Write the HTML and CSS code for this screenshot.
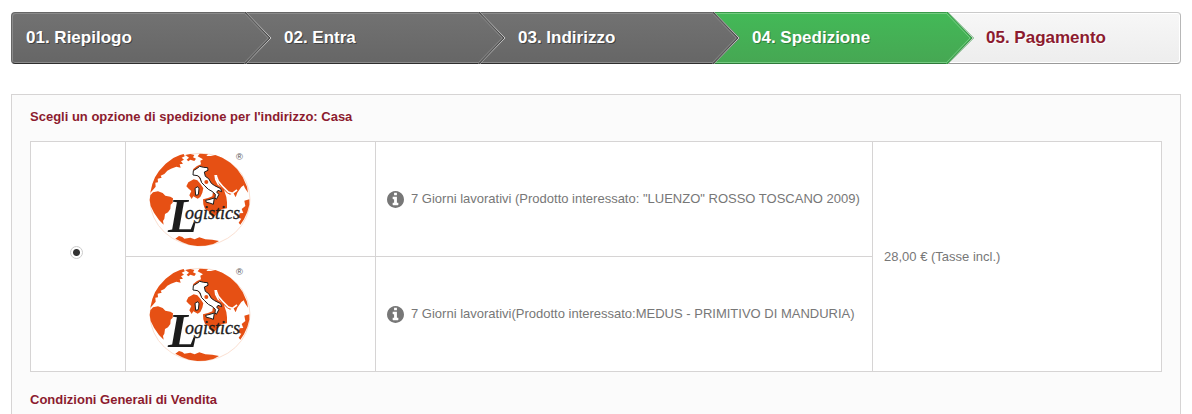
FILE: index.html
```html
<!DOCTYPE html>
<html lang="it">
<head>
  <meta charset="UTF-8" />
  <meta name="viewport" content="width=device-width, initial-scale=1.0"/>
  <title>Spedizione</title>
  <link rel="stylesheet" href="styles.css">
</head>
<body>
  <svg class="defs" aria-hidden="true">
    <symbol id="info" viewBox="0 128 1536 1536">
      <path d="M1024 1376v-160q0-14-9-23t-23-9h-96v-512q0-14-9-23t-23-9h-320q-14 0-23 9t-9 23v160q0 14 9 23t23 9h96v320h-96q-14 0-23 9t-9 23v160q0 14 9 23t23 9h448q14 0 23-9t9-23zm-128-896v-160q0-14-9-23t-23-9h-192q-14 0-23 9t-9 23v160q0 14 9 23t23 9h192q14 0 23-9t9-23zm640 416q0 209-103 385.5t-279.5 279.5-385.5 103-385.5-103-279.5-279.5-103-385.5 103-385.5 279.5-279.5 385.5-103 385.5 103 279.5 279.5 103 385.5z"/>
    </symbol>
    <symbol id="globe" viewBox="42 36 309 285" overflow="visible">
      <ellipse cx="195" cy="179" rx="150" ry="139" fill="#fff" stroke="#fbe0d2" stroke-width="3"/>
      <g fill="#e65014">
        <path d="M52 132L60 112 72 93 92 71 115 54 135 45 146 42 149 49 140 53 147 59 138 64 144 71 134 73 137 83 124 80 108 86 97 92 88 102 77 107 80 113 68 116 69 127 61 128 62 140 53 151 46 158Z"/>
        <path d="M44 180L46 166 54 157 69 154 83 159 91 167 106 170 114 175 113 188 107 194 106 207 99 217 90 222 88 236 84 243 86 254 72 240 57 218 47 198Z"/>
        <path d="M151 45L166 42 178 45 174 52 183 56 178 63 166 59 160 64 155 59 162 53Z"/>
        <path d="M188 49L194 41 219 43 214 48 228 48 241 45 262 53 286 68 306 87 323 111 336 140 339 158 330 145 326 136 319 141 307 158 302 172 295 159 285 164 276 159 253 136 244 113 247 105 238 105 240 119 248 134 266 147 274 171 276 187 276 205 260 208 244 224 233 233 224 216 210 207 205 193 204 178 219 174 232 169 234 155 215 145 200 128 191 112 183 105 177 101 174 88 186 78 198 73 196 62 204 58Z"/>
        <path d="M154 139L160 127 176 118 187 121 196 131 205 145 202 158 196 171 188 176 175 169 170 177 163 166 169 153 161 146Z"/>
        <path d="M328 182L343 178 343 194 337 216 327 238 316 254 311 248 319 236 310 233 314 220 325 219 320 207 331 198Z"/>
        <path d="M121 296L132 288 142 291 148 296 166 293 179 298 193 292 211 298 232 299 252 303 235 312 211 317 187 318 162 314 142 307Z"/>
      </g>
      <!-- Red Sea coast -->
      <path d="M243 106L250 124 262 138 280 156 292 160 306 150" fill="none" stroke="#fff" stroke-width="5"/>
      <g fill="#fff" stroke="#1c1c1c" stroke-width="3" stroke-linejoin="round">
        <path d="M174 105L175 92 188 84 194 79 206 82 218 83 219 91 208 96 211 109 221 116 229 130 239 137 257 146 260 155 249 151 245 157 252 163 244 178 240 174 241 163 231 154 220 148 208 136 200 128 195 113 188 107Z"/>
        <path d="M212 181L225 178 238 174 235 193 224 189 214 187Z"/>
        <path d="M180 145L188 140 192 146 190 164 182 166Z"/>
      </g>
      <circle cx="214" cy="126" r="6" fill="#e65014"/>
      <text class="logo-cap" x="99" y="275" font-size="146">L</text>
      <text class="logo-name" x="150" y="238" font-size="54">ogistics</text>
      <text class="logo-mark" x="303" y="61" font-size="28">®</text>
    </symbol>
    <symbol id="arrow" viewBox="0 0 28 52">
      <path class="arrow-inner" d="M0 1L24 26 0 51"/>
      <path class="arrow-edge" d="M1 0L26 26 1 52"/>
      <path class="arrow-outer" d="M2 0L27 26 2 52"/>
    </symbol>
  </svg>

  <ul class="steps">
    <li class="step done"><a href="#">01. Riepilogo</a><svg class="arrow"><use href="#arrow"/></svg></li>
    <li class="step done"><a href="#">02. Entra</a><svg class="arrow"><use href="#arrow"/></svg></li>
    <li class="step done"><a href="#">03. Indirizzo</a><svg class="arrow"><use href="#arrow"/></svg></li>
    <li class="step current"><span>04. Spedizione</span><svg class="arrow"><use href="#arrow"/></svg></li>
    <li class="step todo"><span>05. Pagamento</span></li>
  </ul>

  <form class="order">
    <p class="title">Scegli un opzione di spedizione per l'indirizzo: Casa</p>
    <table class="delivery">
      <colgroup>
        <col class="col-radio">
        <col class="col-logo">
        <col class="col-info">
        <col>
      </colgroup>
      <tr>
        <td class="pick" rowspan="2"><input type="radio" name="delivery" aria-label="Logistics" checked></td>
        <td class="logo"><svg role="img" aria-label="Logistics"><use href="#globe"/></svg></td>
        <td><div class="delay"><svg class="icon"><use href="#info"/></svg>7 Giorni lavorativi (Prodotto interessato: "LUENZO" ROSSO TOSCANO 2009)</div></td>
        <td rowspan="2">28,00 € (Tasse incl.)</td>
      </tr>
      <tr>
        <td class="logo"><svg role="img" aria-label="Logistics"><use href="#globe"/></svg></td>
        <td><div class="delay"><svg class="icon"><use href="#info"/></svg>7 Giorni lavorativi(Prodotto interessato:MEDUS - PRIMITIVO DI MANDURIA)</div></td>
      </tr>
    </table>
    <p class="title">Condizioni Generali di Vendita</p>
  </form>
</body>
</html>
```
FILE: styles.css
```css
* {
  box-sizing: border-box;
}
body {
  margin: 0;
  padding: 12px 11px 0;
  background: #fff;
  color: #777;
  font-family: "Liberation Sans", Arial, sans-serif;
  font-size: 13px;
  line-height: 18px;
}
.defs {
  position: absolute;
  width: 0;
  height: 0;
}

/* order steps */
.steps {
  display: flex;
  margin: 0 0 30px;
  padding: 0;
  list-style: none;
}
.step {
  position: relative;
  width: 20%;
  height: 52px;
  padding-left: 39px;
  border: 1px solid;
  border-width: 1px 0;
  font-size: 17px;
  font-weight: bold;
  line-height: 50px;
}
.step:first-child {
  padding-left: 14px;
  border-left-width: 1px;
  border-radius: 4px 0 0 4px;
}
.step:last-child {
  border-right-width: 1px;
  border-radius: 0 4px 4px 0;
}
.step a {
  color: inherit;
  text-decoration: none;
}
.done {
  background: linear-gradient(#727272, #666);
  border-color: #666 #5a5a5a #2e2e2e #666;
  box-shadow: inset 0 1px #8b8b8b, inset 0 -1px #8b8b8b;
  color: #fff;
  text-shadow: 1px 1px rgba(0, 0, 0, 0.4);
}
.done:first-child {
  box-shadow: inset 1px 1px #8b8b8b, inset 0 -1px #8b8b8b;
}
.current {
  background: linear-gradient(#43b957, #46a753);
  border-color: #399a49 #399a49 #2e7a3a;
  box-shadow: inset 0 1px #74ca81, inset 0 -1px #74ca81;
  color: #fff;
  text-shadow: 1px 1px rgba(0, 0, 0, 0.3);
}
.todo {
  background: linear-gradient(#f7f7f7, #ededed);
  border-color: #cacaca #b7b7b7 #9a9a9a;
  box-shadow: inset 0 1px #fff, inset -1px -1px #fff;
  color: #8c1b2f;
  text-shadow: 1px 1px #fff;
}

/* point of a step, lies over the next one */
.arrow {
  position: absolute;
  top: -1px;
  right: -27px;
  z-index: 1;
  width: 28px;
  height: 52px;
  background: inherit;
  clip-path: polygon(0 0, 2px 0, 100% 50%, 2px 100%, 0 100%);
  fill: none;
}
.arrow-inner {
  stroke: var(--inner, #858585);
}
.arrow-edge {
  stroke: var(--edge, #484848);
}
.arrow-outer {
  stroke: #c8c8c8;
}
.current .arrow {
  --inner: #74ca81;
  --edge: #3a9b49;
}

/* delivery options */
.order {
  padding: 13px 18px 5px;
  background: #fbfbfb;
  border: 1px solid #d6d4d4;
  border-bottom: 0;
}
.title {
  margin: 0;
  color: #8c1b2f;
  font-weight: bold;
}
.delivery {
  width: 100%;
  margin: 15px 0 19px;
  table-layout: fixed;
  border-collapse: collapse;
  background: #fff;
}
.delivery td {
  height: 115px;
  padding: 0 11px;
  border: 1px solid #d6d4d4;
  vertical-align: middle;
}
.col-radio {
  width: 95px;
}
.col-logo {
  width: 250px;
}
.col-info {
  width: 497px;
}
.delivery .pick {
  padding: 0 4px 10px 0;
  text-align: center;
}
.pick input {
  appearance: none;
  width: 13px;
  height: 13px;
  margin: 0;
  border: 1px solid #ccc;
  border-radius: 50%;
  background: #fff;
  vertical-align: middle;
}
.pick input:checked {
  background: radial-gradient(circle, #333 3px, #fff 4px);
}
.delivery .logo {
  padding-left: 23px;
}
.logo svg {
  display: block;
  width: 103px;
  height: 95px;
  overflow: visible;
}
.logo-cap,
.logo-name {
  fill: #1c1c1c;
  font-family: "Liberation Serif", "Times New Roman", serif;
  font-style: italic;
}
.logo-cap {
  font-weight: bold;
}
.logo-name {
  stroke: #1c1c1c;
  stroke-width: 1px;
}
.logo-mark {
  fill: #555;
  font-family: "Liberation Sans", Arial, sans-serif;
}
.delay {
  display: flex;
  align-items: center;
  gap: 7px;
}
.icon {
  flex: none;
  width: 17px;
  height: 17px;
  fill: #777;
}
```
